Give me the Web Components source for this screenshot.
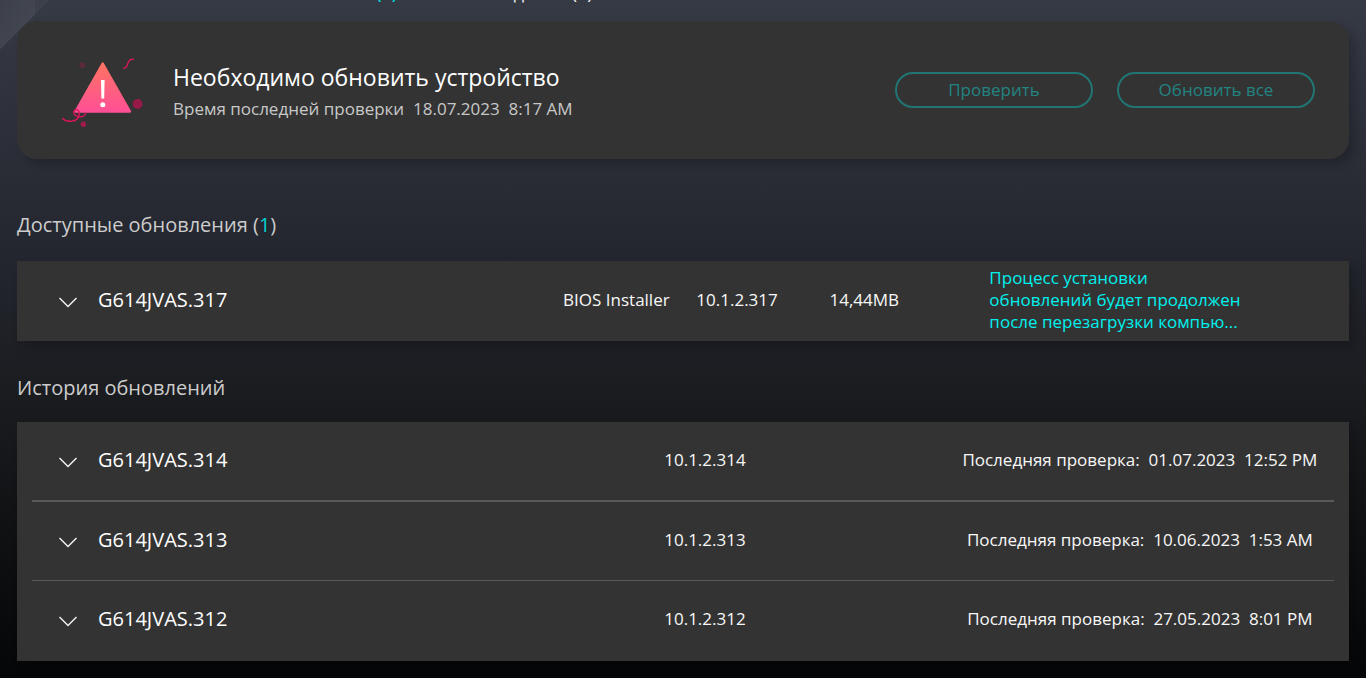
<!DOCTYPE html>
<html lang="ru">
<head>
<meta charset="utf-8">
<title>Обновления</title>
<style>
  html { min-height: 100%; background: #050607; }
  body {
    margin: 0;
    min-height: 100vh;
    font-family: "Open Sans", "Noto Sans", sans-serif;
    color: #f8f8f8;
    background:
      linear-gradient(90deg, transparent 35px, rgba(54,58,69,.5) 35px) 0 0 / 50px 15px no-repeat,
      linear-gradient(135deg, rgba(255,255,255,.03), rgba(255,255,255,.07) 50%, transparent 50%) 0 0 / 50px 50px no-repeat,
      linear-gradient(180deg, #363a45 0%, #2a2d36 25%, #22252d 40%, #1b1c20 58%, #0f1012 80%, #050607 100%);
  }
</style>
</head>
<body>
<update-page></update-page>

<script>
const define = (name, html) => {
  const template = document.createElement('template');
  template.innerHTML = html;
  customElements.define(name, class extends HTMLElement {
    constructor() {
      super();
      this.attachShadow({ mode: 'open' }).append(template.content.cloneNode(true));
    }
  });
};

define('page-tabs', `
<style>
  :host { display: block; height: 21px; overflow: hidden; }
  nav { display: flex; gap: 78px; margin: -20px 0 0 244px; font-size: 18px; line-height: 24px; white-space: nowrap; }
  a { color: #f2f2f2; text-decoration: none; }
  .on { color: #00e5e5; }
</style>
<nav><a class="on" href="#updates">Обновления (1)</a><a href="#pending">Ожидание (0)</a></nav>
`);

define('alert-icon', `
<style>
  :host { display: block; width: 84px; height: 76px; }
  svg { display: block; }
</style>
<svg width="84" height="76" viewBox="61 52 84 76" fill="none" aria-hidden="true">
  <defs><linearGradient id="g" x1="0" y1="0" x2="0" y2="1">
    <stop offset="0" stop-color="#ff7362"/><stop offset="1" stop-color="#ff5096"/>
  </linearGradient></defs>
  <path d="M102.700 63.500 L130 111.500 H75.500 Z" fill="url(#g)" stroke="url(#g)" stroke-width="2.400" stroke-linejoin="round"/>
  <path d="M101 80 H104.600 L104.200 98.500 H101.400 Z" fill="#fff"/>
  <circle cx="102.800" cy="104.800" r="2.500" fill="#fff"/>
  <circle cx="82.300" cy="65.300" r="2.800" fill="#5f2a3c"/>
  <circle cx="137.600" cy="104" r="4.900" fill="#961947"/>
  <circle cx="83.400" cy="124.300" r="2.700" fill="#a01a4c"/>
  <g stroke="#e0145c" stroke-width="1.400" stroke-linecap="round">
    <path d="M123.700 68.300 C129.500 68 125.500 59 133.300 59.300"/>
    <path d="M62.700 118.600 C67 123 77.500 122 79 115.500 C80.500 109 74.500 108 73.700 112 C73 116 82.500 120 85.700 113.200"/>
  </g>
</svg>
`);

define('pill-button', `
<style>
  :host { display: block; width: 198px; }
  button {
    width: 100%; height: 36px; padding: 0;
    border: 2px solid #217574; border-radius: 18px;
    background: none; color: #228482; font: 17px/32px "Open Sans", "Noto Sans", sans-serif;
  }
</style>
<button type="button"><slot></slot></button>
`);

define('status-card', `
<style>
  :host {
    display: flex; align-items: center; box-sizing: border-box;
    min-height: 138px; padding: 0 34px 0 44px;
    border-radius: 20px; background: #333;
    box-shadow: 6px 6px 10px rgba(0,0,0,.2);
  }
  .text { flex: 1; margin-left: 28px; padding-top: 4px; }
  h1 { margin: 0; font-size: 23px; line-height: 34px; font-weight: 400; color: #fff; }
  p { margin: 0; font-size: 17px; line-height: 30px; color: #c8c8c8; white-space: pre; }
  .actions { display: flex; gap: 24px; }
</style>
<alert-icon></alert-icon>
<div class="text">
  <h1><slot name="title"></slot></h1>
  <p><slot name="time"></slot></p>
</div>
<div class="actions"><slot name="actions"></slot></div>
`);

define('section-title', `
<style>
  :host { display: block; }
  h2 { margin: 0; font-size: 20px; line-height: 32px; font-weight: 400; color: #ccc; }
  ::slotted(b) { font-weight: 400; color: #00d0d0; }
</style>
<h2><slot></slot></h2>
`);

define('row-name', `
<style>
  :host { display: flex; align-items: center; gap: 21px; padding-left: 42px; font-size: 20px; line-height: 28px; color: #fff; }
  button { display: block; width: 18px; height: 18px; margin-top: 6px; padding: 0; border: 0; background: none; }
  svg { display: block; }
</style>
<button type="button" aria-label="Подробнее"><svg width="18" height="14" viewBox="0 0 18 14" fill="none" stroke="#f0f0f0" stroke-width="1.500"><path d="M.5 2 L9 10.500 L17.500 2"/></svg></button>
<span><slot></slot></span>
`);

define('update-row', `
<style>
  :host {
    display: grid; grid-template-columns: 41fr 10fr 10fr 12fr 27fr; align-items: center;
    min-height: 80px; padding-bottom: 3px; background: #333; font-size: 17px; line-height: 22px;
    box-shadow: 6px 6px 10px rgba(0,0,0,.2); box-sizing: border-box; white-space: nowrap;
  }
  .status { color: #00f0ee; white-space: pre-line; }
</style>
<row-name><slot name="name"></slot></row-name>
<span><slot name="kind"></slot></span>
<span><slot name="version"></slot></span>
<span><slot name="size"></slot></span>
<span class="status"><slot name="status"></slot></span>
`);

define('history-row', `
<style>
  :host {
    display: grid; grid-template-columns: 410fr 213fr 63fr 314fr; align-items: center; box-sizing: border-box;
    min-height: 78px; padding-bottom: 2px; font-size: 17px; line-height: 24px; white-space: pre;
  }
  .version { text-align: center; }
  .checked { grid-column: 4; text-align: center; }
</style>
<row-name><slot name="name"></slot></row-name>
<span class="version"><slot name="version"></slot></span>
<span class="checked"><slot name="checked"></slot></span>
`);

define('history-panel', `
<style>
  :host { display: block; padding-bottom: 2px; background: #333; box-shadow: 6px 6px 10px rgba(0,0,0,.2); }
  ::slotted(hr) { margin: 0 15px; border: 0; border-top: 1px solid #595959; }
  ::slotted(hr:first-of-type) { border-top-width: 2px; }
</style>
<slot></slot>
`);

define('update-page', `
<style>
  :host { display: block; padding: 0 17px 17px; }
  .first { margin: 50px 0 20px; }
  .second { margin: 31px 0 18px; }
</style>
<page-tabs></page-tabs>
<main>
  <status-card>
    <span slot="title">Необходимо обновить устройство</span>
    <span slot="time">Время последней проверки  18.07.2023  8:17 AM</span>
    <pill-button slot="actions">Проверить</pill-button>
    <pill-button slot="actions">Обновить все</pill-button>
  </status-card>
  <section-title class="first">Доступные обновления (<b>1</b>)</section-title>
  <update-row>
    <span slot="name">G614JVAS.317</span>
    <span slot="kind">BIOS Installer</span>
    <span slot="version">10.1.2.317</span>
    <span slot="size">14,44MB</span>
    <span slot="status">Процесс установки
обновлений будет продолжен
после перезагрузки компью...</span>
  </update-row>
  <section-title class="second">История обновлений</section-title>
  <history-panel>
    <history-row>
      <span slot="name">G614JVAS.314</span>
      <span slot="version">10.1.2.314</span>
      <span slot="checked">Последняя проверка:  01.07.2023  12:52 PM</span>
    </history-row>
    <hr>
    <history-row>
      <span slot="name">G614JVAS.313</span>
      <span slot="version">10.1.2.313</span>
      <span slot="checked">Последняя проверка:  10.06.2023  1:53 AM</span>
    </history-row>
    <hr>
    <history-row>
      <span slot="name">G614JVAS.312</span>
      <span slot="version">10.1.2.312</span>
      <span slot="checked">Последняя проверка:  27.05.2023  8:01 PM</span>
    </history-row>
  </history-panel>
</main>
`);
</script>
</body>
</html>
